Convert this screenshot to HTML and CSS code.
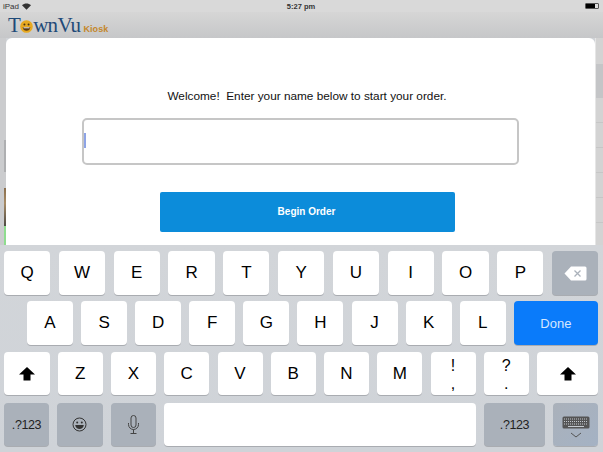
FILE: index.html
```html
<!DOCTYPE html>
<html lang="en">
<head>
  <meta charset="UTF-8">
  <title>TownVu Kiosk</title>
  <link rel="stylesheet" href="styles.css">
</head>
<body>
  <div class="status">
    <div class="status-left">
      <span>iPad</span>
      <svg class="wifi" width="9" height="7" viewBox="0 0 11 8"><path d="M5.5 8 L0 2.6 C3 -0.6 8 -0.6 11 2.6 Z" fill="#333"/></svg>
    </div>
    <div class="status-time">5:27 pm</div>
    <div class="status-right"><div class="battery"><div class="battery-fill"></div></div></div>
  </div>

  <div class="header">
    <div class="logo">
      <span class="logo-name">T</span>
      <svg class="smiley" width="13" height="13" viewBox="0 0 17 17">
        <circle cx="8.5" cy="8.5" r="8.2" fill="#e8a920"/>
        <circle cx="5.8" cy="6" r="1.3" fill="#4a3210"/>
        <circle cx="11.2" cy="6" r="1.3" fill="#4a3210"/>
        <path d="M3.5 9 H13.5 C13.3 12.5 11 14 8.5 14 C6 14 3.7 12.5 3.5 9 Z" fill="#5a3a12"/>
        <path d="M4.5 9.6 H12.5 V10.8 H4.5 Z" fill="#fff"/>
      </svg>
      <span class="logo-name">wnVu</span>
      <span class="logo-kiosk">Kiosk</span>
    </div>
  </div>

  <div class="stage">
    <div class="strip strip-left">
      <div class="strip-a"></div>
      <div class="strip-b"></div>
      <div class="strip-gap"></div>
      <div class="strip-c"></div>
      <div class="strip-d"></div>
    </div>
    <div class="modal">
      <p class="welcome">Welcome!&nbsp; Enter your name below to start your order.</p>
      <div class="name-input"><div class="caret"></div></div>
      <button class="begin">Begin Order</button>
    </div>
    <div class="strip strip-right">
      <div class="side-top"></div>
      <div class="side-dark"></div>
      <div class="side-row"></div>
      <div class="side-row"></div>
      <div class="side-row"></div>
      <div class="side-row"></div>
      <div class="side-row"></div>
    </div>
  </div>

  <div class="keyboard">
    <div class="row row-1">
      <div class="key">Q</div><div class="key">W</div><div class="key">E</div><div class="key">R</div><div class="key">T</div><div class="key">Y</div><div class="key">U</div><div class="key">I</div><div class="key">O</div><div class="key">P</div>
      <div class="key dark">
        <svg width="23" height="15" viewBox="0 0 23 15"><path d="M7 0.5 H21 Q22.5 0.5 22.5 2 V13 Q22.5 14.5 21 14.5 H7 L0.5 7.5 Z" fill="#fff"/><path d="M10.5 4.5 L16.5 10.5 M16.5 4.5 L10.5 10.5" stroke="#aab1ba" stroke-width="1.3"/></svg>
      </div>
    </div>
    <div class="row row-2">
      <div class="key">A</div><div class="key">S</div><div class="key">D</div><div class="key">F</div><div class="key">G</div><div class="key">H</div><div class="key">J</div><div class="key">K</div><div class="key">L</div>
      <div class="key done">Done</div>
    </div>
    <div class="row row-3">
      <div class="key shift"><svg width="16" height="14" viewBox="0 0 16 14"><path d="M8 0 L16 7.5 H11.5 V13.5 H4.5 V7.5 H0 Z" fill="#000"/></svg></div>
      <div class="key wide">Z</div><div class="key wide">X</div><div class="key wide">C</div><div class="key wide">V</div><div class="key wide">B</div><div class="key wide">N</div><div class="key wide">M</div>
      <div class="key wide punct"><span>!</span><span>,</span></div>
      <div class="key wide punct"><span>?</span><span>.</span></div>
      <div class="key shift-right"><svg width="16" height="14" viewBox="0 0 16 14"><path d="M8 0 L16 7.5 H11.5 V13.5 H4.5 V7.5 H0 Z" fill="#000"/></svg></div>
    </div>
    <div class="row row-4">
      <div class="key dark small num-left">.?123</div>
      <div class="key dark small side">
        <svg width="15" height="15" viewBox="0 0 15 15"><circle cx="7.5" cy="7.5" r="6.5" fill="none" stroke="#333" stroke-width="1"/><circle cx="5.2" cy="5.6" r="1" fill="#333"/><circle cx="9.8" cy="5.6" r="1" fill="#333"/><path d="M3.2 8 H11.8 C11.5 10.8 9.6 12 7.5 12 C5.4 12 3.5 10.8 3.2 8 Z" fill="#333"/></svg>
      </div>
      <div class="key dark small side">
        <svg width="13" height="19" viewBox="0 0 13 19"><rect x="4" y="0.5" width="5" height="12" rx="2.5" fill="none" stroke="#444" stroke-width="1"/><path d="M1.5 8 V9.5 C1.5 12.5 4 14.5 6.5 14.5 C9 14.5 11.5 12.5 11.5 9.5 V8 M6.5 14.5 V18 M3.5 18.5 H9.5" fill="none" stroke="#444" stroke-width="1"/></svg>
      </div>
      <div class="key space"></div>
      <div class="key dark small num-right">.?123</div>
      <div class="key dark small hide-kb">
        <svg width="28" height="23" viewBox="0 0 28 23"><rect x="0.5" y="0.5" width="27" height="12" rx="1.5" fill="#555"/><path d="M2 3 H26 M2 5.5 H26 M2 8 H26" stroke="#c4c9cf" stroke-width="1" stroke-dasharray="1 1"/><path d="M6 10.5 H22" stroke="#c4c9cf" stroke-width="1"/><path d="M9 17 L14 21 L19 17" fill="none" stroke="#555" stroke-width="1"/></svg>
      </div>
    </div>
  </div>
</body>
</html>
```

FILE: styles.css
```css
* {
  box-sizing: border-box;
}

body {
  margin: 0;
  width: 603px;
  height: 452px;
  overflow: hidden;
  font-family: "Liberation Sans", Arial, sans-serif;
  background: #d0d3d7;
}

/* Status bar */
.status {
  height: 12px;
  display: flex;
  align-items: center;
  justify-content: space-between;
  padding: 0 4px 0 3px;
  background: #d9d9d9;
  font-size: 8px;
  color: #333;
}

.status-left {
  width: 100px;
  display: flex;
  align-items: center;
  gap: 3px;
}

.status-time {
  font-weight: bold;
  font-size: 7.5px;
}

.status-right {
  width: 100px;
  display: flex;
  justify-content: flex-end;
}

.battery {
  width: 14px;
  height: 6px;
  border: 1px solid #555;
  border-radius: 1px;
  background: #ddd;
}

.battery-fill {
  width: 9px;
  height: 4px;
  background: #000;
}

/* Header */
.header {
  height: 26px;
  padding-left: 8px;
  background: linear-gradient(#d6d6d6, #c6c7c9);
}

.logo {
  display: flex;
  align-items: baseline;
  height: 26px;
  padding-top: 1px;
  font-family: "Liberation Serif", serif;
  color: #1f4a78;
}

.logo-name {
  font-size: 21px;
  line-height: 24px;
  letter-spacing: -0.7px;
}

.smiley {
  align-self: center;
  margin: 2px 0 0 0;
}

.logo-kiosk {
  margin-left: 3px;
  font-family: "Liberation Sans", sans-serif;
  font-size: 9px;
  letter-spacing: 0.1px;
  font-weight: bold;
  color: #c4872a;
}

/* Modal and what shows beside it */
.stage {
  height: 207px;
  display: flex;
}

.strip {
  width: 6px;
  flex: none;
  background: #cbccce;
}

.strip-left {
  display: flex;
  flex-direction: column;
  align-items: flex-end;
}

.strip-left div {
  width: 2px;
}

.strip-a {
  height: 102px;
}

.strip-b {
  height: 32px;
  background: #aeafb1;
}

.strip-gap {
  height: 16px;
}

.strip-c {
  height: 38px;
  background: linear-gradient(#8a6f4e, #a88c66 40%, #4d4a44);
}

.strip-d {
  height: 19px;
  background: #8fdc8f;
}

.strip-right {
  width: 8px;
  background: #d3d3d3;
  border-left: 1px solid #e6e6e6;
}

.side-top {
  height: 26px;
}

.side-dark {
  height: 34px;
  background: #c4c5c7;
}

.side-row {
  height: 25px;
  border-bottom: 1px solid #c6c6c6;
}

.modal {
  width: 589px;
  flex: none;
  border-radius: 6px 6px 0 0;
  background: #fff;
  display: flex;
  flex-direction: column;
  align-items: center;
  padding-top: 51px;
}

.welcome {
  margin: 0 0 0 13px;
  font-size: 11.8px;
  line-height: 14px;
  color: #111;
}

.name-input {
  width: 437px;
  height: 47px;
  margin-top: 15px;
  border: 2px solid #c6c6c6;
  border-radius: 5px;
  padding: 13px 0 0 0;
}

.caret {
  width: 2px;
  height: 15px;
  background: #8ea4e6;
}

.begin {
  width: 295px;
  height: 40px;
  margin-top: 27px;
  margin-left: 14px;
  padding: 0 2px 2px 0;
  border: none;
  border-radius: 2px;
  background: #0c8cda;
  color: #fff;
  font-family: "Liberation Sans", sans-serif;
  font-size: 10px;
  font-weight: bold;
}

/* Keyboard */
.keyboard {
  height: 207px;
  padding: 6px 5px 0 4px;
  display: flex;
  flex-direction: column;
  background: linear-gradient(#d2d5d9, #cfd3d8);
}

.row {
  display: flex;
}

.row-1 {
  height: 44px;
  gap: 8.5px;
}

.row-1 .key {
  width: 46.3px;
}

.row-2 {
  height: 44px;
  margin-top: 6px;
  padding-left: 23px;
  gap: 8.1px;
}

.row-3 {
  height: 43px;
  margin-top: 7px;
  gap: 8.25px;
}

.row-4 {
  height: 43px;
  margin-top: 8px;
  gap: 8px;
}

.key {
  width: 46px;
  flex: none;
  display: flex;
  align-items: center;
  justify-content: center;
  border-radius: 4px;
  background: #fff;
  box-shadow: 0 1px 0 #a9acb1;
  font-size: 17px;
  color: #000;
}

.dark {
  background: #aab1ba;
}

.small {
  font-size: 12.5px;
  letter-spacing: -0.4px;
  color: #222;
}

.done {
  width: 84px;
  background: #0a7bfa;
  color: #d6e7ff;
  font-size: 13px;
}

.shift {
  width: 45.5px;
}

.wide {
  width: 45px;
}

.shift-right {
  width: 61px;
}

.punct {
  flex-direction: column;
  gap: 4px;
  padding-top: 2px;
  font-size: 16px;
  line-height: 14px;
}

.side {
  width: 45.5px;
}

.num-left {
  width: 45px;
}

.space {
  width: 312px;
}

.num-right {
  width: 61px;
}

.hide-kb {
  width: 45px;
  align-items: flex-start;
  padding-top: 13px;
  background: linear-gradient(135deg, #aab1ba, #a4b2c4);
}
```
